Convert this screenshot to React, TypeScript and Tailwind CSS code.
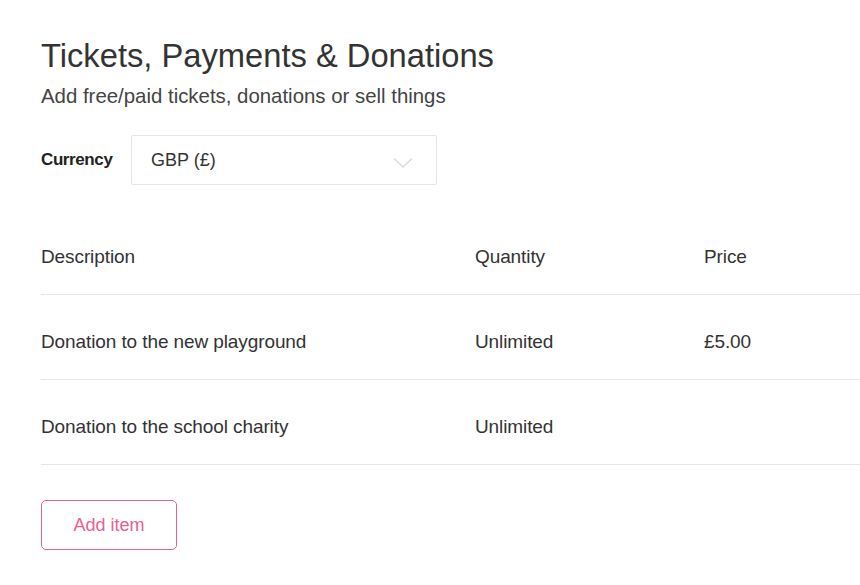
import React from "react";

export default function App() {
  const rows = [
    { d: "Description", q: "Quantity", p: "Price" },
    { d: "Donation to the new playground", q: "Unlimited", p: "£5.00" },
    { d: "Donation to the school charity", q: "Unlimited", p: "" },
  ];
  return (
    <div className="w-[860px] h-[585px] overflow-hidden bg-white text-[#333333]" style={{ fontFamily: '"Liberation Sans", Arial, sans-serif' }}>
      <div className="pl-[41px] pt-[36px]">
        <h1 className="text-[32.7px] leading-[40px] text-[#333333]">Tickets, Payments &amp; Donations</h1>
        <p className="text-[20.4px] leading-[24px] mt-[8px] text-[#444444]">Add free/paid tickets, donations or sell things</p>
        <div className="flex items-center mt-[27px]">
          <span className="w-[90px] text-[17px] font-bold text-[#222222] tracking-[-0.4px] -mt-[1px]">Currency</span>
          <div className="w-[306px] h-[50px] border border-[#e6e6e6] rounded-[2px] flex items-center justify-between pl-[19px] pr-[23px]">
            <span className="text-[18px] text-[#333333]">GBP (£)</span>
            <svg width="20" height="12" viewBox="0 0 20 12" fill="none" className="mt-[6px]">
              <path d="M1 1.5 L10 10 L19 1.5" stroke="#dddddd" strokeWidth="1.6" />
            </svg>
          </div>
        </div>
        <div className="mt-[25px]">
          {rows.map((r, i) => (
            <div key={i} className="flex items-end h-[85px] pb-[25px] border-b border-[#e6e6e6] text-[19px] leading-[24px] tracking-[-0.1px]">
              <div className="w-[434px]">{r.d}</div>
              <div className="w-[229px]">{r.q}</div>
              <div>{r.p}</div>
            </div>
          ))}
        </div>
        <button className="mt-[35px] w-[136px] h-[50px] border border-[#ea5f8d] rounded-[5px] text-[#ea5f8d] text-[18px]">
          Add item
        </button>
      </div>
    </div>
  );
}
